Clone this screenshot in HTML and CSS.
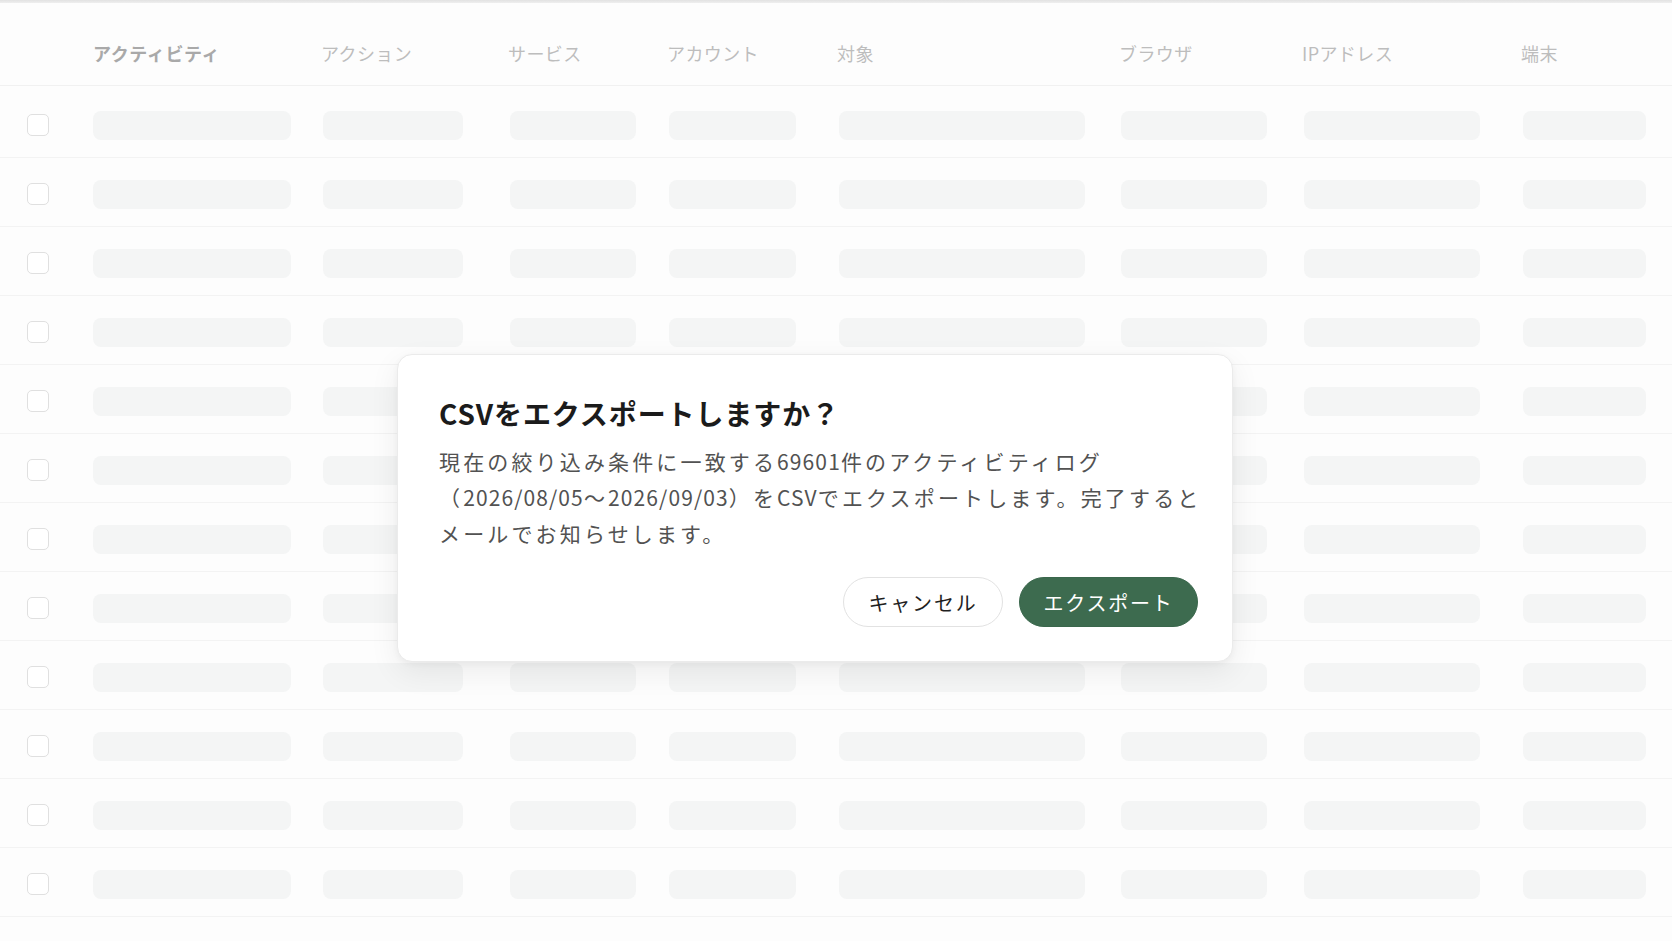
FILE: index.html
```html
<!DOCTYPE html>
<html lang="ja">
<head>
<meta charset="utf-8">
<title>アクティビティログ</title>
<link rel="stylesheet" href="styles.css">
</head>
<body>
<div class="page">
  <div class="topline"></div>
  <div class="table">
    <div class="thead">
      <div class="th th-check"></div>
      <div class="th th-active">アクティビティ</div>
      <div class="th">アクション</div>
      <div class="th">サービス</div>
      <div class="th">アカウント</div>
      <div class="th">対象</div>
      <div class="th">ブラウザ</div>
      <div class="th">IPアドレス</div>
      <div class="th">端末</div>
    </div>
    <div class="tbody">
      <div class="row"><div class="cell"><span class="check"></span></div><div class="cell"><span class="bar b1"></span></div><div class="cell"><span class="bar b2"></span></div><div class="cell"><span class="bar b3"></span></div><div class="cell"><span class="bar b4"></span></div><div class="cell"><span class="bar b5"></span></div><div class="cell"><span class="bar b6"></span></div><div class="cell"><span class="bar b7"></span></div><div class="cell"><span class="bar b8"></span></div></div>
      <div class="row"><div class="cell"><span class="check"></span></div><div class="cell"><span class="bar b1"></span></div><div class="cell"><span class="bar b2"></span></div><div class="cell"><span class="bar b3"></span></div><div class="cell"><span class="bar b4"></span></div><div class="cell"><span class="bar b5"></span></div><div class="cell"><span class="bar b6"></span></div><div class="cell"><span class="bar b7"></span></div><div class="cell"><span class="bar b8"></span></div></div>
      <div class="row"><div class="cell"><span class="check"></span></div><div class="cell"><span class="bar b1"></span></div><div class="cell"><span class="bar b2"></span></div><div class="cell"><span class="bar b3"></span></div><div class="cell"><span class="bar b4"></span></div><div class="cell"><span class="bar b5"></span></div><div class="cell"><span class="bar b6"></span></div><div class="cell"><span class="bar b7"></span></div><div class="cell"><span class="bar b8"></span></div></div>
      <div class="row"><div class="cell"><span class="check"></span></div><div class="cell"><span class="bar b1"></span></div><div class="cell"><span class="bar b2"></span></div><div class="cell"><span class="bar b3"></span></div><div class="cell"><span class="bar b4"></span></div><div class="cell"><span class="bar b5"></span></div><div class="cell"><span class="bar b6"></span></div><div class="cell"><span class="bar b7"></span></div><div class="cell"><span class="bar b8"></span></div></div>
      <div class="row"><div class="cell"><span class="check"></span></div><div class="cell"><span class="bar b1"></span></div><div class="cell"><span class="bar b2"></span></div><div class="cell"><span class="bar b3"></span></div><div class="cell"><span class="bar b4"></span></div><div class="cell"><span class="bar b5"></span></div><div class="cell"><span class="bar b6"></span></div><div class="cell"><span class="bar b7"></span></div><div class="cell"><span class="bar b8"></span></div></div>
      <div class="row"><div class="cell"><span class="check"></span></div><div class="cell"><span class="bar b1"></span></div><div class="cell"><span class="bar b2"></span></div><div class="cell"><span class="bar b3"></span></div><div class="cell"><span class="bar b4"></span></div><div class="cell"><span class="bar b5"></span></div><div class="cell"><span class="bar b6"></span></div><div class="cell"><span class="bar b7"></span></div><div class="cell"><span class="bar b8"></span></div></div>
      <div class="row"><div class="cell"><span class="check"></span></div><div class="cell"><span class="bar b1"></span></div><div class="cell"><span class="bar b2"></span></div><div class="cell"><span class="bar b3"></span></div><div class="cell"><span class="bar b4"></span></div><div class="cell"><span class="bar b5"></span></div><div class="cell"><span class="bar b6"></span></div><div class="cell"><span class="bar b7"></span></div><div class="cell"><span class="bar b8"></span></div></div>
      <div class="row"><div class="cell"><span class="check"></span></div><div class="cell"><span class="bar b1"></span></div><div class="cell"><span class="bar b2"></span></div><div class="cell"><span class="bar b3"></span></div><div class="cell"><span class="bar b4"></span></div><div class="cell"><span class="bar b5"></span></div><div class="cell"><span class="bar b6"></span></div><div class="cell"><span class="bar b7"></span></div><div class="cell"><span class="bar b8"></span></div></div>
      <div class="row"><div class="cell"><span class="check"></span></div><div class="cell"><span class="bar b1"></span></div><div class="cell"><span class="bar b2"></span></div><div class="cell"><span class="bar b3"></span></div><div class="cell"><span class="bar b4"></span></div><div class="cell"><span class="bar b5"></span></div><div class="cell"><span class="bar b6"></span></div><div class="cell"><span class="bar b7"></span></div><div class="cell"><span class="bar b8"></span></div></div>
      <div class="row"><div class="cell"><span class="check"></span></div><div class="cell"><span class="bar b1"></span></div><div class="cell"><span class="bar b2"></span></div><div class="cell"><span class="bar b3"></span></div><div class="cell"><span class="bar b4"></span></div><div class="cell"><span class="bar b5"></span></div><div class="cell"><span class="bar b6"></span></div><div class="cell"><span class="bar b7"></span></div><div class="cell"><span class="bar b8"></span></div></div>
      <div class="row"><div class="cell"><span class="check"></span></div><div class="cell"><span class="bar b1"></span></div><div class="cell"><span class="bar b2"></span></div><div class="cell"><span class="bar b3"></span></div><div class="cell"><span class="bar b4"></span></div><div class="cell"><span class="bar b5"></span></div><div class="cell"><span class="bar b6"></span></div><div class="cell"><span class="bar b7"></span></div><div class="cell"><span class="bar b8"></span></div></div>
      <div class="row"><div class="cell"><span class="check"></span></div><div class="cell"><span class="bar b1"></span></div><div class="cell"><span class="bar b2"></span></div><div class="cell"><span class="bar b3"></span></div><div class="cell"><span class="bar b4"></span></div><div class="cell"><span class="bar b5"></span></div><div class="cell"><span class="bar b6"></span></div><div class="cell"><span class="bar b7"></span></div><div class="cell"><span class="bar b8"></span></div></div>
    </div>
  </div>

  <div class="dialog" role="dialog" aria-labelledby="dlg-title">
    <h2 class="dialog-title" id="dlg-title">CSVをエクスポートしますか？</h2>
    <p class="dialog-body">現在の絞り込み条件に一致する<span class="latin">69601</span>件のアクティビティログ<br>（<span class="latin">2026/08/05</span>〜<span class="latin">2026/09/03</span>）を<span class="latin">CSV</span>でエクスポートします。完了すると<br>メールでお知らせします。</p>
    <div class="dialog-actions">
      <button class="btn btn-cancel" type="button">キャンセル</button>
      <button class="btn btn-primary" type="button">エクスポート</button>
    </div>
  </div>
</div>
</body>
</html>
```

FILE: styles.css
```css
* {
  box-sizing: border-box;
}

html, body {
  margin: 0;
  padding: 0;
  background: #fdfdfd;
}

body {
  font-family: "Noto Sans CJK JP", "Noto Sans", sans-serif;
  color: #222;
  width: 1672px;
  height: 941px;
  overflow: hidden;
}

.page {
  position: relative;
  width: 1672px;
  height: 941px;
  overflow: hidden;
}

.topline {
  height: 3px;
  background: linear-gradient(#e2e2e2, #efefef);
}

.thead,
.row {
  display: grid;
  grid-template-columns: 88px 230px 187px 159px 170px 282px 183px 219px 1fr;
}

.thead {
  height: 83px;
  padding-top: 38px;
  border-bottom: 1px solid #f1f1f1;
  align-items: start;
}

.th {
  font-size: 18px;
  line-height: 24px;
  letter-spacing: 0.4px;
  color: #bdbdbd;
  padding-left: 3px;
  white-space: nowrap;
}

.th-active {
  color: #a9a9a9;
  font-weight: 700;
  padding-left: 5px;
  letter-spacing: 0.6px;
}

.tbody {
  padding-top: 3px;
}

.row {
  height: 69px;
  padding-top: 4px;
  padding-left: 5px;
  border-bottom: 1px solid #f3f3f3;
  align-items: center;
}

.cell {
  display: flex;
  align-items: center;
}

.check {
  display: block;
  width: 22px;
  height: 22px;
  margin-left: 22px;
  border: 1.5px solid #e0e0e0;
  border-radius: 5px;
  background: #fff;
}

.bar {
  display: block;
  height: 29px;
  border-radius: 8px;
  background: #f4f5f5;
}

.b1 { width: 198px; }
.b2 { width: 140px; }
.b3 { width: 126px; }
.b4 { width: 127px; }
.b5 { width: 246px; }
.b6 { width: 146px; }
.b7 { width: 176px; }
.b8 { width: 123px; }

.dialog {
  position: absolute;
  left: 397px;
  top: 354px;
  width: 836px;
  padding: 39px 34px 34px 41px;
  background: #fff;
  border: 1px solid #ebebeb;
  border-radius: 15px;
  box-shadow: 0 10px 30px rgba(0, 0, 0, 0.07), 0 2px 6px rgba(0, 0, 0, 0.04);
}

.dialog-title {
  margin: 0 0 10px;
  font-size: 28px;
  line-height: 39px;
  font-weight: 700;
  letter-spacing: 0.9px;
  color: #1b1b1b;
  white-space: nowrap;
}

.dialog-body {
  margin: 0;
  font-size: 21px;
  line-height: 36px;
  letter-spacing: 3.15px;
  color: #525252;
  white-space: nowrap;
}

.latin {
  letter-spacing: 1.1px;
}

.dialog-actions {
  display: flex;
  justify-content: flex-end;
  gap: 16px;
  margin-top: 26px;
}

.btn {
  height: 50px;
  border-radius: 25px;
  font-family: "Noto Sans CJK JP", "Noto Sans", sans-serif;
  font-size: 20px;
  letter-spacing: 1.8px;
  padding: 0;
  cursor: pointer;
}

.btn-cancel {
  width: 160px;
  background: #fff;
  border: 1px solid #e2e2e2;
  color: #1f1f1f;
}

.btn-primary {
  width: 179px;
  background: #3d6b4f;
  border: 1px solid #3a674c;
  color: #fff;
}
```
